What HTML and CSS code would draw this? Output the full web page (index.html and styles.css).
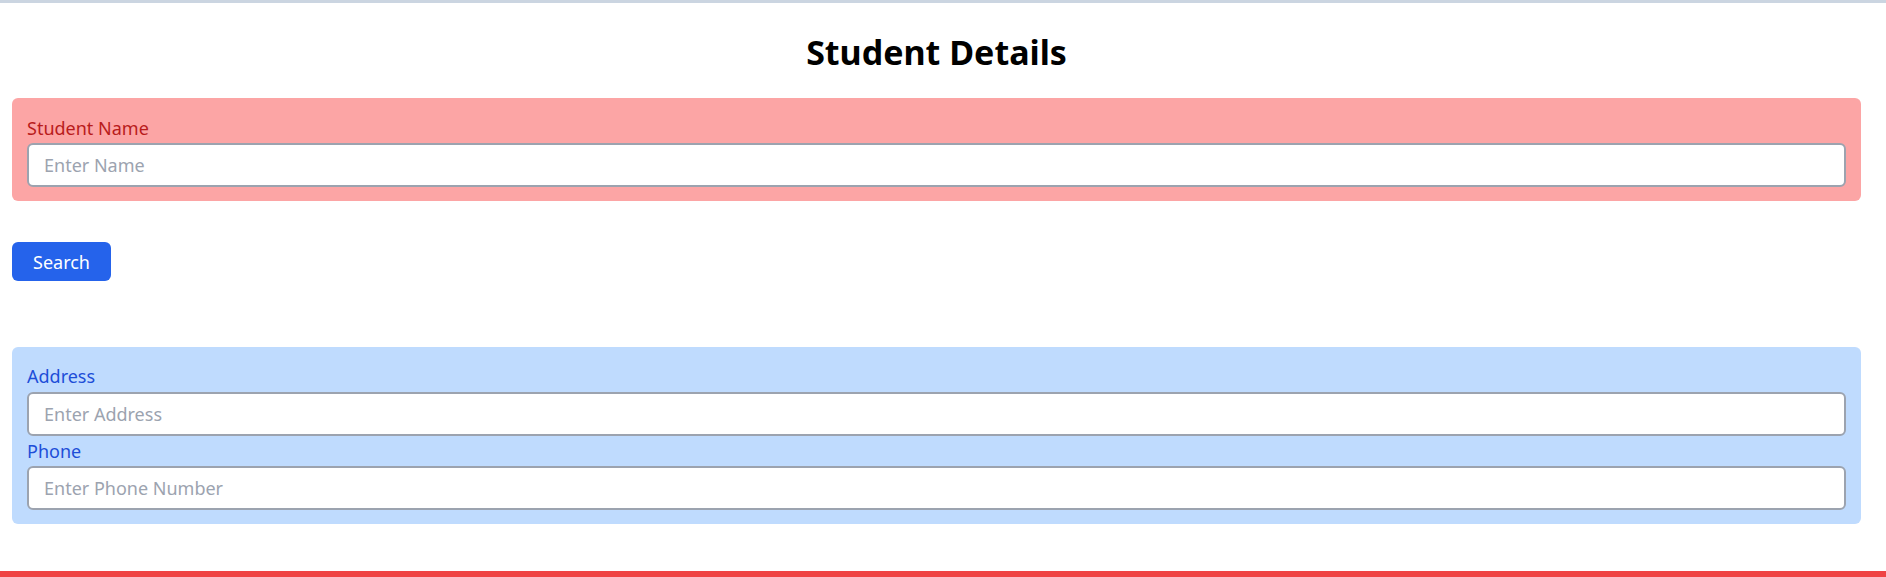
FILE: index.html
```html
<!DOCTYPE html>
<html lang="en">
<head>
<meta charset="utf-8">
<title>Student Details</title>
<link rel="stylesheet" href="styles.css">
</head>
<body>
<main class="page">
  <h1 class="title">Student Details</h1>
  <section class="panel panel-red">
    <label class="field-label" for="name">Student Name</label>
    <input class="field-input" id="name" type="text" placeholder="Enter Name">
  </section>
  <button class="btn" type="button">Search</button>
  <section class="panel panel-blue">
    <label class="field-label" for="address">Address</label>
    <input class="field-input" id="address" type="text" placeholder="Enter Address">
    <label class="field-label" for="phone">Phone</label>
    <input class="field-input" id="phone" type="text" placeholder="Enter Phone Number">
  </section>
</main>
<footer class="bottom-bar"></footer>
</body>
</html>
```
FILE: styles.css
```css
* { box-sizing: border-box; }
html, body { margin: 0; padding: 0; }
body {
  font-family: "Noto Sans", "Open Sans", sans-serif;
  font-size: 18px;
  color: #000;
  background: #fff;
  border-top: 3px solid #cbd5e1;
  height: 577px;
  display: flex;
  flex-direction: column;
}
.page {
  padding: 0 25px 0 12px;
  display: flex;
  flex-direction: column;
  align-items: flex-start;
}
.title {
  align-self: stretch;
  text-align: center;
  margin: 0;
  padding-top: 25px;
  font-size: 34px;
  line-height: 48px;
  font-weight: 700;
  height: 95px;
}
.panel {
  align-self: stretch;
  border-radius: 6px;
  padding: 14.7px 15px 14.7px 15px;
  display: flex;
  flex-direction: column;
}
.panel-red { background: #fca5a5; }
.panel-red .field-label { color: #b91c1c; }
.panel-blue { background: #bfdbfe; margin-top: 65.3px; }
.panel-blue .field-label { color: #1d4ed8; }
.field-label {
  display: block;
  line-height: 28.8px;
  padding-top: 1px;
  margin-bottom: 1px;
}
.field-input {
  display: block;
  width: 100%;
  height: 43.3px;
  border: 2px solid #9ca3af;
  border-radius: 6px;
  padding: 0 15px;
  font-family: inherit;
  font-size: 18px;
  background: #fff;
  outline: none;
}
.field-input::placeholder { color: #9ca3af; }
.btn {
  margin-top: 40.3px;
  width: 99px;
  height: 39.7px;
  border: none;
  border-radius: 6px;
  background: #2563eb;
  color: #fff;
  font-family: inherit;
  font-size: 18px;
  padding: 0;
}
.bottom-bar {
  margin-top: auto;
  height: 6px;
  background: #ef4444;
}
```
